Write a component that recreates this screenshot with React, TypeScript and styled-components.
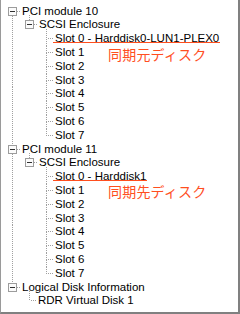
import styled, { createGlobalStyle } from 'styled-components';

type Node = {
  label: string;
  mark?: boolean;
  children?: Node[];
};

type Row = {
  label: string;
  mark?: boolean;
  level: number;
  guides: boolean[];
  first: boolean;
  last: boolean;
  isRootFirst: boolean;
  branch: boolean;
};

const ROW = 13.8;
const MID = ROW / 2;
const LINE = '#a0a0a0';
const NOTE = '#ff4f1f';

const slots = (first: string): Node[] =>
  Array.from({ length: 8 }, (_, i) => ({
    label: i === 0 ? first : `Slot ${i}`,
    mark: i === 0,
  }));

const tree: Node[] = [
  {
    label: 'PCI module 10',
    children: [{ label: 'SCSI Enclosure', children: slots('Slot 0 - Harddisk0-LUN1-PLEX0') }],
  },
  {
    label: 'PCI module 11',
    children: [{ label: 'SCSI Enclosure', children: slots('Slot 0 - Harddisk1') }],
  },
  {
    label: 'Logical Disk Information',
    children: [{ label: 'RDR Virtual Disk 1' }],
  },
];

function flatten(nodes: Node[], level = 0, guides: boolean[] = []): Row[] {
  return nodes.flatMap((node, i) => {
    const last = i === nodes.length - 1;
    const row: Row = {
      label: node.label,
      mark: node.mark,
      level,
      guides,
      first: i === 0,
      last,
      isRootFirst: level === 0 && i === 0,
      branch: !!node.children,
    };
    return [row, ...(node.children ? flatten(node.children, level + 1, [...guides, !last]) : [])];
  });
}

const GlobalStyle = createGlobalStyle`
  html, body {
    margin: 0;
    padding: 0;
    background: #fff;
  }
`;

const Frame = styled.div`
  position: relative;
  width: 240px;
  height: 314px;
  box-sizing: border-box;
  padding: 4.6px 0 0 3px;
  background: #fff;
  border-left: 1px solid #9a9a9a;
  border-right: 2px solid #808080;
  border-bottom: 2px solid #808080;
  overflow: hidden;
  font-family: 'Liberation Sans', Arial, sans-serif;
`;

const TreeRow = styled.div`
  display: flex;
  align-items: stretch;
  height: ${ROW}px;
`;

const Guide = styled.div<{ $on: boolean }>`
  flex: 0 0 17px;
  background: ${({ $on }) =>
    $on ? `repeating-linear-gradient(to bottom, ${LINE} 0 1px, transparent 1px 2px) no-repeat 8px 0 / 1px 100%` : 'none'};
`;

const JointSvg = styled.svg`
  flex: 0 0 17px;
  overflow: visible;
  shape-rendering: crispEdges;
`;

const Label = styled.span<{ $branch: boolean; $mark?: boolean }>`
  position: relative;
  margin-left: ${({ $branch }) => ($branch ? 1 : 0)}px;
  font-size: 11.5px;
  line-height: ${ROW}px;
  color: #000;
  white-space: nowrap;

  &::after {
    content: '';
    display: ${({ $mark }) => ($mark ? 'block' : 'none')};
    position: absolute;
    left: -2px;
    right: -1px;
    bottom: 2.5px;
    height: 1px;
    background: ${NOTE};
  }
`;

const Note = styled.span<{ $top: number }>`
  position: absolute;
  left: 107px;
  top: ${({ $top }) => $top}px;
  font-family: 'Noto Sans CJK JP', sans-serif;
  font-size: 14px;
  line-height: 16px;
  letter-spacing: 0.2px;
  color: ${NOTE};
  white-space: nowrap;
`;

function Joint({ row }: { row: Row }) {
  const from = row.first && row.level > 0 ? -3 : 0;
  return (
    <JointSvg width={17} height={ROW} viewBox={`0 0 17 ${ROW}`} aria-hidden="true">
      <g stroke={LINE} strokeWidth={1} strokeDasharray="1 1" fill="none">
        {!row.isRootFirst && <line x1={8.5} y1={from} x2={8.5} y2={MID} />}
        {!row.last && <line x1={8.5} y1={MID} x2={8.5} y2={ROW} />}
        {row.branch ? <line x1={13} y1={MID} x2={17} y2={MID} /> : <line x1={8.5} y1={MID} x2={15} y2={MID} />}
      </g>
      {row.branch && (
        <>
          <rect x={4.5} y={MID - 4} width={8} height={8} fill="#fbfbfb" stroke="#9c9c9c" />
          <line x1={6} y1={MID} x2={11} y2={MID} stroke="#303030" />
        </>
      )}
    </JointSvg>
  );
}

export default function App() {
  const rows = flatten(tree);
  return (
    <>
      <GlobalStyle />
      <Frame>
        {rows.map((row, i) => (
          <TreeRow key={i}>
            {row.guides.map((on, j) => (
              <Guide key={j} $on={on} />
            ))}
            <Joint row={row} />
            <Label $branch={row.branch} $mark={row.mark}>
              {row.label}
            </Label>
          </TreeRow>
        ))}
        <Note $top={46}>同期元ディスク</Note>
        <Note $top={183}>同期先ディスク</Note>
      </Frame>
    </>
  );
}
